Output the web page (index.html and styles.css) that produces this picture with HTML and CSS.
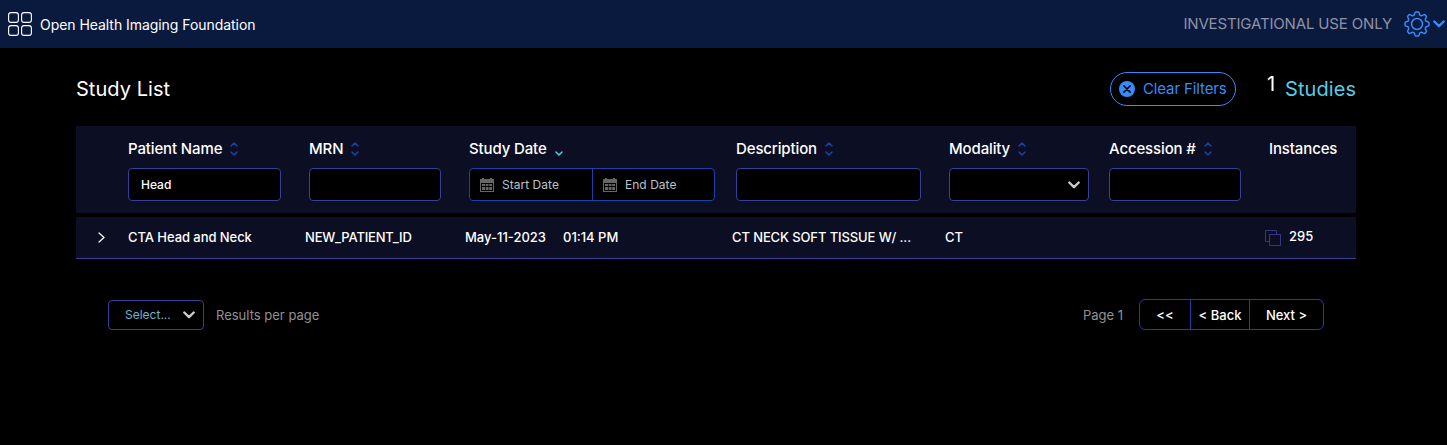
FILE: index.html
```html
<!DOCTYPE html>
<html lang="en">
<head>
<meta charset="utf-8">
<title>Study List</title>
<link rel="stylesheet" href="styles.css">
</head>
<body>
<svg class="defs" width="0" height="0" aria-hidden="true">
  <symbol id="sort" viewBox="0 0 8 14"><path d="M1 4 4 1l3 3M1 10l3 3 3-3" fill="none" stroke="currentColor" stroke-width="1.500" stroke-linecap="round" stroke-linejoin="round"/></symbol>
  <symbol id="calendar" viewBox="0 0 14 14"><path fill="currentColor" fill-rule="evenodd" d="M0 1h2V0h2v1h6V0h2v1h2v13H0zM1 5v8h12V5zM2 6h3v2H2zM5.700 6h2.800v2H5.700zM9.200 6H12v2H9.200zM2 9h3v3H2zM5.700 9h2.800v3H5.700zM9.200 9H12v3H9.200z"/></symbol>
  <symbol id="chevron" viewBox="0 0 12 8"><path d="M1.300 1.500 6 6.200l4.700-4.700" fill="none" stroke="currentColor" stroke-width="2.400" stroke-linecap="round" stroke-linejoin="round"/></symbol>
</svg>
<header class="topbar">
  <svg class="logo" viewBox="0 0 24 24"><g fill="none" stroke="#fff" stroke-width="1.100"><rect x=".6" y=".6" width="9.800" height="9.800" rx="2.500"/><rect x="13.600" y=".6" width="9.800" height="9.800" rx="2.500"/><rect x=".6" y="13.600" width="9.800" height="9.800" rx="2.500"/><rect x="13.600" y="13.600" width="9.800" height="9.800" rx="2.500"/></g></svg>
  <span class="brand">Open Health Imaging Foundation</span>
  <span class="notice">INVESTIGATIONAL USE ONLY</span>
  <svg class="gear" viewBox="0 0 26 26"><g fill="none" stroke="currentColor" stroke-width="1.500" stroke-linejoin="round"><circle cx="13" cy="13" r="5.500"/><path d="M10.800 2.300Q11 1 12 1h2q1 0 1.200 1.300c.3 2.300 2.200 3.100 4 1.700q1.100-.8 1.800-.1l1.100 1.100q.7.700-.1 1.800c-1.400 1.800-.6 3.700 1.700 4Q25 11 25 12v2q0 1-1.300 1.200c-2.300.3-3.100 2.200-1.700 4q.8 1.100.1 1.800L21 22.100q-.7.700-1.800-.1c-1.800-1.400-3.700-.6-4 1.700Q15 25 14 25h-2q-1 0-1.200-1.300c-.3-2.300-2.200-3.100-4-1.700q-1.100.8-1.800.1L3.900 21q-.7-.7.1-1.800c1.400-1.800.6-3.700-1.700-4Q1 15 1 14v-2q0-1 1.300-1.200c2.300-.3 3.100-2.200 1.700-4q-.8-1.100-.1-1.800L5 3.900q.7-.7 1.800.1c1.800 1.400 3.700.6 4-1.700z"/></g></svg>
  <svg class="caret"><use href="#chevron"/></svg>
</header>
<main class="content">
  <section class="heading">
    <h1 class="title">Study List</h1>
    <button class="clear"><svg class="clear-icon" viewBox="0 0 16 16"><circle cx="8" cy="8" r="8" fill="currentColor"/><path d="m4.800 4.800 6.400 6.400m0-6.400-6.400 6.400" stroke="#000" stroke-width="1.600" stroke-linecap="round"/></svg><span class="clear-text">Clear Filters</span></button>
    <span class="count">1</span>
    <span class="studies">Studies</span>
  </section>
  <section class="filters columns">
    <div class="field name"><div class="label"><span class="t">Patient Name</span><svg class="sort"><use href="#sort"/></svg></div><div class="box">Head</div></div>
    <div class="field mrn"><div class="label"><span class="t">MRN</span><svg class="sort"><use href="#sort"/></svg></div><div class="box"></div></div>
    <div class="field date"><div class="label"><span class="t">Study Date</span><svg class="sorted" viewBox="0 0 8 5"><path d="m1 1 3 3 3-3" fill="none" stroke="currentColor" stroke-width="1.500" stroke-linecap="round" stroke-linejoin="round"/></svg></div>
      <div class="box range"><div class="day"><svg class="cal"><use href="#calendar"/></svg><span>Start Date</span></div><div class="day"><svg class="cal"><use href="#calendar"/></svg><span>End Date</span></div></div></div>
    <div class="field desc"><div class="label"><span class="t">Description</span><svg class="sort"><use href="#sort"/></svg></div><div class="box"></div></div>
    <div class="field mod"><div class="label"><span class="t">Modality</span><svg class="sort"><use href="#sort"/></svg></div><div class="box select"><svg class="chev"><use href="#chevron"/></svg></div></div>
    <div class="field acc"><div class="label"><span class="t">Accession #</span><svg class="sort"><use href="#sort"/></svg></div><div class="box"></div></div>
    <div class="field"><div class="label"><span class="t">Instances</span></div></div>
  </section>
  <section class="study">
    <svg class="expand" viewBox="0 0 7 11"><path d="m1 1 5 4.500L1 10" fill="none" stroke="#fff" stroke-width="1.200" stroke-linecap="round" stroke-linejoin="round"/></svg>
    <span class="cell patient">CTA Head and Neck</span>
    <span class="cell mrn-value">NEW_PATIENT_ID</span>
    <span class="cell when"><span class="d">May-11-2023</span><span>01:14 PM</span></span>
    <span class="cell summary">CT NECK SOFT TISSUE W/ ...</span>
    <span class="cell">CT</span>
    <span></span>
    <span class="instances"><svg class="series" viewBox="0 0 16 16"><path d="M4 11.500H.5V.5h11V4M4.500 4.500h11v11h-11z" fill="none" stroke="currentColor"/></svg><span class="num">295</span></span>
  </section>
  <footer class="pager">
    <div class="size"><span>Select...</span><svg class="chev"><use href="#chevron"/></svg></div>
    <span class="per">Results per page</span>
    <span class="page">Page 1</span>
    <div class="buttons"><button class="first">&lt;&lt;</button><button class="back">&lt; Back</button><button class="next">Next &gt;</button></div>
  </footer>
</main>
</body>
</html>
```
FILE: styles.css
```css
* { box-sizing: border-box; }
body { margin: 0; background: #000; color: #fff; font-family: Inter, sans-serif; font-size: 13px; min-height: 445px; }
svg { display: block; flex: none; }
.defs { position: absolute; }
button { font: inherit; background: none; margin: 0; padding: 0; color: inherit; border: 0; }
.topbar { height: 48px; background: #0a1a3f; display: flex; align-items: center; padding: 0 2px 0 8px; }
.logo { width: 24px; height: 24px; }
.brand { margin-left: 8px; font-size: 14px; letter-spacing: -.05px; }
.notice { margin-left: auto; font-size: 15px; letter-spacing: -.16px; color: #8f92a4; padding-bottom: 2px; }
.gear { width: 26px; height: 26px; margin-left: 12px; color: #348cfd; }
.caret { width: 12px; height: 8px; margin-left: 3px; color: #348cfd; }
.content { width: 1280px; margin-left: 76px; }
.heading { height: 78px; padding-top: 4px; display: flex; align-items: center; }
.title { margin: 0; font-size: 20px; font-weight: 400; letter-spacing: .04px; }
.clear { margin-left: auto; width: 126px; height: 34px; border: 1px solid #348cfd; border-radius: 17px; color: #348cfd; display: flex; align-items: center; padding-left: 8px; font-size: 15px; letter-spacing: -.12px; white-space: nowrap; }
.clear-icon { width: 16px; height: 16px; margin-right: 8px; }
.clear-text { padding-bottom: 2px; }
.count { width: 10px; margin: 0 8px 11px 31px; font-size: 20px; }
.studies { width: 71px; font-size: 20px; letter-spacing: .1px; color: #5acce6; }
.filters { height: 87px; background: #0c0e23; display: grid; grid-template-columns: 181px 160px 267px 213px 160px 160px 87px; padding: 13px 0 0 52px; }
.label { height: 20px; display: flex; align-items: center; font-size: 15px; letter-spacing: -.13px; font-weight: 500; white-space: nowrap; margin-bottom: 9px; }
.t { padding-bottom: 2px; }
.sort { width: 8px; height: 14px; margin-left: 8px; color: #1744a8; }
.sorted { width: 8px; height: 5px; margin: 9px 0 0 8px; color: #5acce6; }
.box { height: 33px; background: #000; border: 1px solid #3a3f99; border-radius: 4px; display: flex; align-items: center; padding-left: 12px; font-size: 12px; font-weight: 500; width: 132px; }
.name .box { width: 153px; }
.desc .box { width: 185px; }
.mod .box { width: 140px; }
.date .box { width: 246px; padding: 0; border-color: #1744a8; font-size: 12px; letter-spacing: .03px; font-weight: 400; color: #b9c2cd; }
.day { width: 123px; height: 31px; display: flex; align-items: center; padding-left: 10px; }
.day + .day { border-left: 1px solid #1744a8; }
.cal { width: 14px; height: 14px; margin-right: 8px; color: #666; }
.select { justify-content: flex-end; padding-right: 8px; }
.chev { width: 12px; height: 8px; color: #ccc; }
.study { height: 42px; margin-top: 4px; background: #0c0e23; border-bottom: 1px solid #3a3f99; display: grid; grid-template-columns: 52px 177px 160px 267px 213px 160px 160px 91px; align-items: center; font-weight: 500; white-space: nowrap; }
.expand { width: 7px; height: 11px; margin-left: 22px; }
.cell { padding-bottom: 2px; letter-spacing: -.06px; }
.mrn-value { letter-spacing: -.2px; }
.summary { letter-spacing: -.11px; }
.when { display: flex; letter-spacing: 0; }
.d { width: 98px; }
.instances { display: flex; align-items: center; }
.series { width: 16px; height: 16px; color: #34387f; margin-right: 8px; }
.num { margin-top: -3px; }
.pager { display: flex; align-items: center; margin-top: 40px; padding: 0 32px; height: 31px; color: #919191; }
.size { width: 96px; height: 30px; border: 1px solid #3a3f99; border-radius: 4px; display: flex; align-items: center; justify-content: space-between; padding: 0 8px 0 16px; font-size: 12px; color: #6fb3d3; margin-right: 12px; }
.page { margin-left: auto; margin-right: 16px; }
.buttons { display: flex; height: 31px; width: 185px; border: 1px solid #1744a8; border-radius: 6px; color: #fff; font-weight: 500; letter-spacing: -.08px; }
.first { width: 50px; }
.back { width: 60px; border: solid #1744a8; border-width: 0 1px; }
.next { flex: 1; }
```
